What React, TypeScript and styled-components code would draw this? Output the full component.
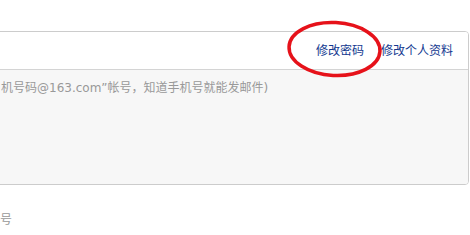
import React from "react";
import styled, { createGlobalStyle } from "styled-components";

const GlobalStyle = createGlobalStyle`
  html, body {
    margin: 0;
    padding: 0;
    background: #fff;
  }
  body {
    font-family: "DejaVu Sans", "Noto Sans CJK SC", sans-serif;
    font-size: 12px;
  }
`;

const Page = styled.div`
  position: relative;
  width: 470px;
  height: 235px;
  overflow: hidden;
  padding-top: 31px;
  box-sizing: border-box;
`;

const Panel = styled.div`
  width: 470px;
  margin-left: -1px;
  border: 1px solid #cccccc;
  border-radius: 0 4px 4px 0;
  box-sizing: border-box;
  overflow: hidden;
`;

const PanelHead = styled.div`
  height: 37px;
  display: flex;
  align-items: center;
  justify-content: flex-end;
  gap: 17px;
  padding-right: 15px;
  background: #fff;
  border-bottom: 1px solid #d4d4d4;
`;

const Link = styled.a`
  color: #12388f;
  text-decoration: none;
  font-size: 12px;
  line-height: 16px;
`;

const PanelBody = styled.div`
  height: 114px;
  background: #f7f7f7;
  padding: 10px 0 0 1px;
  box-sizing: border-box;
`;

const Hint = styled.p`
  margin: 0;
  color: #999999;
  line-height: 16px;
`;

const Tail = styled.p`
  margin: 27px 0 0;
  color: #999999;
  line-height: 16px;
`;

const Circle = styled.svg`
  position: absolute;
  left: 284px;
  top: 19px;
`;

const App = () => {
  return (
    <>
      <GlobalStyle />
      <Page>
        <Panel>
          <PanelHead>
            <Link href="#">修改密码</Link>
            <Link href="#">修改个人资料</Link>
          </PanelHead>
          <PanelBody>
            <Hint>机号码@163.com”帐号，知道手机号就能发邮件)</Hint>
          </PanelBody>
        </Panel>
        <Tail>号</Tail>
        <Circle width="101" height="60" viewBox="0 0 101 60">
          <ellipse
            cx="50.5"
            cy="30"
            rx="45.5"
            ry="26.5"
            fill="none"
            stroke="#e6121a"
            strokeWidth="3.5"
            transform="rotate(3 50.5 30)"
          />
        </Circle>
      </Page>
    </>
  );
};

export default App;
